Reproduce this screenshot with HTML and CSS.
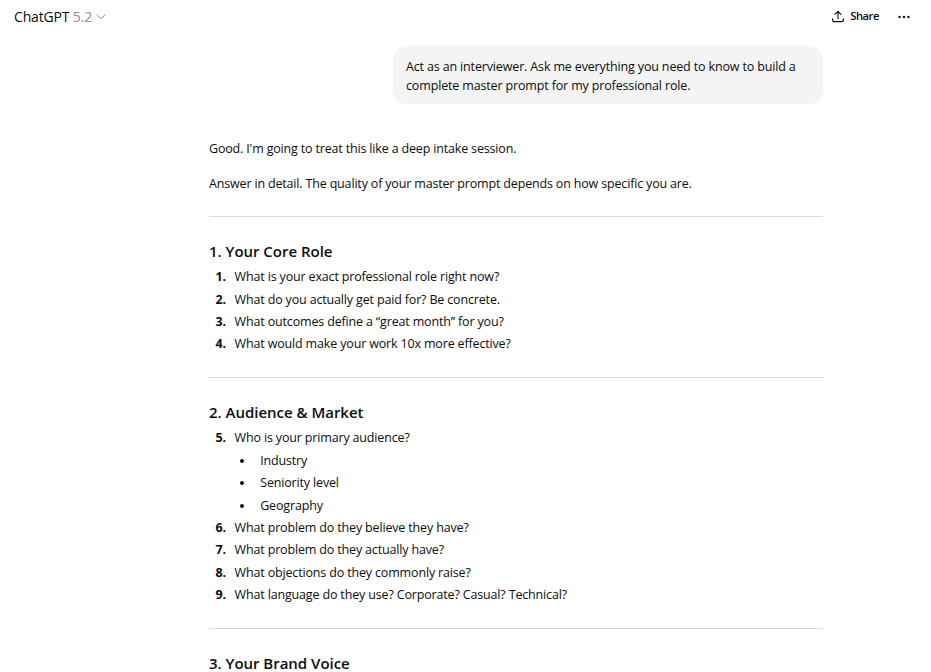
FILE: index.html
```
<!DOCTYPE html>
<html lang="en">
<head>
    <meta charset="UTF-8">
    <meta name="viewport" content="width=device-width, initial-scale=1.0">
    <title>ChatGPT</title>
    <link rel="stylesheet" href="styles.css">
</head>
<body>
    <header class="topbar">
        <button class="model">
            <span>ChatGPT <span class="version">5.2</span></span>
            <svg class="chevron" width="10" height="6" viewBox="0 0 10 6" fill="none" stroke="currentColor" stroke-linecap="round" stroke-linejoin="round"><path d="M1 .8 5 4.8 9 .8"/></svg>
        </button>
        <div class="actions">
            <button class="share">
                <svg width="14" height="14" viewBox="0 0 14 14" fill="none" stroke="currentColor" stroke-width="1.1" stroke-linecap="round" stroke-linejoin="round"><path d="M7 8.7V1.5M4 4.3 7 1.3 10 4.3M1.5 8.7v.9a2 2 0 0 0 2 2h7a2 2 0 0 0 2-2v-.9"/></svg>
                <span>Share</span>
            </button>
            <button class="more" aria-label="More">
                <svg width="14" height="4" viewBox="0 0 14 4" fill="currentColor"><circle cx="2.5" cy="2" r="1.2"/><circle cx="7" cy="2" r="1.2"/><circle cx="11.5" cy="2" r="1.2"/></svg>
            </button>
        </div>
    </header>

    <main class="thread">
        <div class="bubble">Act as an interviewer. Ask me everything you need to know to build a<br>complete master prompt for my professional role.</div>

        <div class="answer">
            <p>Good. I'm going to treat this like a deep intake session.</p>
            <p>Answer in detail. The quality of your master prompt depends on how specific you are.</p>
            <hr>
            <h3>1. Your Core Role</h3>
            <ol>
                <li>What is your exact professional role right now?</li>
                <li>What do you actually get paid for? Be concrete.</li>
                <li>What outcomes define a “great month” for you?</li>
                <li>What would make your work 10x more effective?</li>
            </ol>
            <hr>
            <h3>2. Audience &amp; Market</h3>
            <ol start="5">
                <li>Who is your primary audience?
                    <ul>
                        <li>Industry</li>
                        <li>Seniority level</li>
                        <li>Geography</li>
                    </ul>
                </li>
                <li>What problem do they believe they have?</li>
                <li>What problem do they actually have?</li>
                <li>What objections do they commonly raise?</li>
                <li>What language do they use? Corporate? Casual? Technical?</li>
            </ol>
            <hr>
            <h3>3. Your Brand Voice</h3>
        </div>
    </main>
</body>
</html>
```
FILE: styles.css
```
* {
    box-sizing: border-box;
}

body {
    font-family: "Segoe UI", "Open Sans", "Noto Sans", sans-serif;
    font-size: 12.5px;
    line-height: 22.4px;
    letter-spacing: -0.16px;
    margin: 0;
    height: 672px;
    overflow: hidden;
    background-color: #fff;
    color: #0d0d0d;
}

button {
    font: inherit;
    letter-spacing: inherit;
    color: inherit;
    background: none;
    border: none;
    padding: 0;
    display: flex;
    align-items: center;
}

.topbar {
    display: flex;
    justify-content: space-between;
    height: 33px;
    padding: 0 20px 0 14px;
}

.model {
    font-size: 14px;
    gap: 4px;
}

.model span {
    position: relative;
    top: 0.5px;
}

.version,
.chevron {
    color: #8f8f8f;
}

.actions {
    display: flex;
    gap: 18px;
}

.share {
    font-size: 11.2px;
    font-weight: 600;
    letter-spacing: -0.45px;
    gap: 5px;
}

.thread {
    width: 614px;
    margin: 13px 0 0 209px;
}

.bubble {
    width: 430px;
    height: 58px;
    margin-left: auto;
    padding: 11px 13px;
    line-height: 19.2px;
    letter-spacing: -0.15px;
    border-radius: 14.4px;
    background-color: #f4f4f4;
}

.answer {
    padding-top: 34px;
}

p {
    margin: 0 0 12.8px;
    letter-spacing: -0.17px;
}

hr {
    height: 1px;
    margin: 21.2px 0 21px;
    border: none;
    background-color: #d9d9d9;
}

p + hr {
    margin-top: 20px;
}

h3 {
    margin: 0 0 2.5px;
    font-size: 15px;
    font-weight: 600;
    line-height: 26px;
    letter-spacing: -0.02px;
}

ol,
ul {
    margin: 0;
    padding-left: 20px;
}

li {
    padding-left: 5.6px;
}

ul {
    list-style-type: disc;
}

ol > li::marker {
    font-weight: 700;
}
```
